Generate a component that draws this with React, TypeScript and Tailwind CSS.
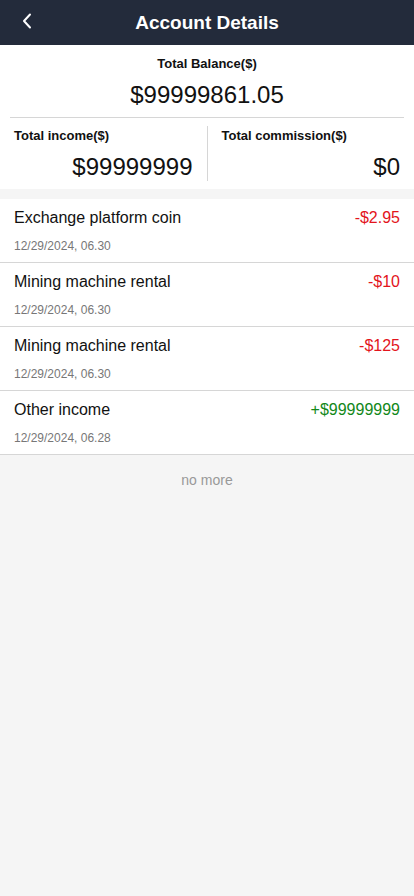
import React from 'react';

type Record = {
  title: string;
  amount: string;
  time: string;
  income?: boolean;
};

const records: Record[] = [
  { title: 'Exchange platform coin', amount: '-$2.95', time: '12/29/2024, 06.30' },
  { title: 'Mining machine rental', amount: '-$10', time: '12/29/2024, 06.30' },
  { title: 'Mining machine rental', amount: '-$125', time: '12/29/2024, 06.30' },
  { title: 'Other income', amount: '+$99999999', time: '12/29/2024, 06.28', income: true },
];

export default function App() {
  return (
    <div className="min-h-[896px] w-full bg-[#f5f5f5] flex flex-col font-['Liberation_Sans',Arial,sans-serif] text-[#111]">
      {/* Header */}
      <div className="h-[45px] bg-[#232b3b] flex items-center relative">
        <button className="absolute left-[18px] top-[10px] w-[18px] h-[22px] flex items-center justify-center">
          <svg width="10" height="16" viewBox="0 0 10 16" fill="none">
            <path d="M8 1.5L2 8L8 14.5" stroke="white" strokeWidth="2" strokeLinecap="round" strokeLinejoin="round" />
          </svg>
        </button>
        <h1 className="flex-1 text-center text-white font-bold text-[19px] leading-none">Account Details</h1>
      </div>

      {/* Summary */}
      <div className="bg-white flex flex-col">
        <div className="pt-[10px] text-center text-[13px] leading-[18px] font-bold">Total Balance($)</div>
        <div className="mt-[8px] text-center text-[24px] leading-[28px]">$99999861.05</div>
        <div className="mt-[8px] mx-[10px] h-px bg-[#d6d6d6]" />
        <div className="flex pt-[8px] pb-[5px]">
          <div className="flex-1 flex flex-col pl-[14px] pr-[14px] border-r border-[#d6d6d6]">
            <div className="pt-px text-[13px] leading-[18px] font-bold">Total income($)</div>
            <div className="mt-[8px] text-right text-[24px] leading-[28px]">$99999999</div>
          </div>
          <div className="flex-1 flex flex-col pl-[14px] pr-[14px]">
            <div className="pt-px text-[13px] leading-[18px] font-bold">Total commission($)</div>
            <div className="mt-[8px] text-right text-[24px] leading-[28px]">$0</div>
          </div>
        </div>
        <div className="h-[3px]" />
      </div>

      {/* Records */}
      <div className="mt-[10px] bg-white flex flex-col">
        {records.map((r, i) => (
          <div key={i} className="h-[64px] border-b border-[#d6d6d6] px-[14px] flex flex-col">
            <div className="flex justify-between items-center pt-[9px]">
              <span className="text-[16px] leading-[20px]">{r.title}</span>
              <span className={`text-[16px] leading-[20px] ${r.income ? 'text-[#12881a]' : 'text-[#e3141c]'}`}>{r.amount}</span>
            </div>
            <div className="mt-[11px] text-[12px] leading-[14px] text-[#777]">{r.time}</div>
          </div>
        ))}
      </div>

      <div className="pt-[16px] text-center text-[14px] leading-[18px] text-[#999]">no more</div>
    </div>
  );
}
